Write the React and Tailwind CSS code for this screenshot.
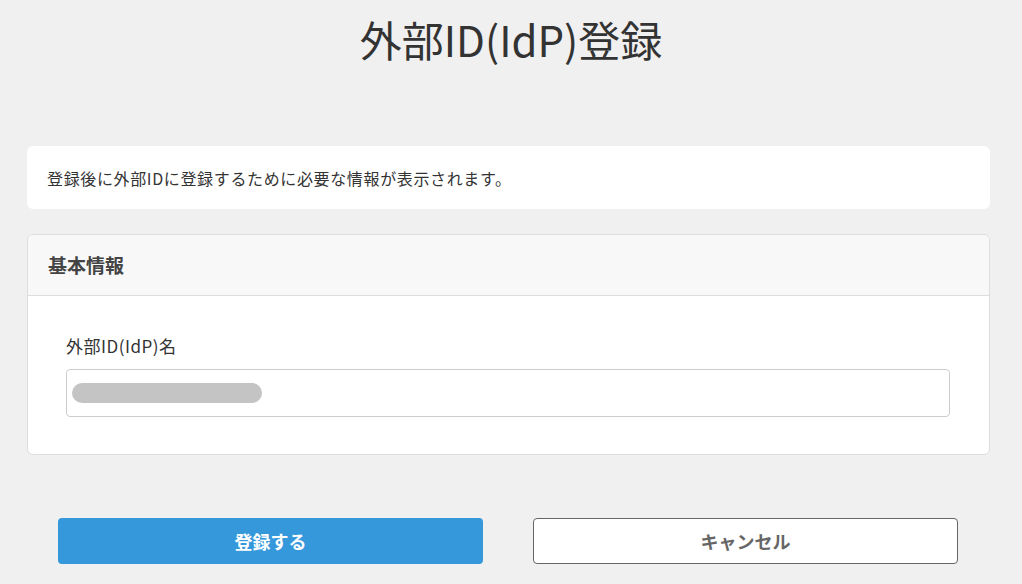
export default function App() {
    return (
        <div
            className="min-h-screen w-full bg-[#f0f0f0] text-[#333]"
            style={{ fontFamily: '"Noto Sans CJK JP", "Noto Sans", sans-serif' }}
        >
            <h1 className="h-[76px] flex items-center justify-center text-[42px] font-normal text-[#333]">
                外部ID(IdP)登録
            </h1>

            <div className="ml-[27px] w-[963px]">
                <div className="mt-[70px] h-[63px] rounded-md bg-white px-5 flex items-center text-[16px] tracking-[0.04em]">
                    登録後に外部IDに登録するために必要な情報が表示されます。
                </div>

                <div className="mt-[25px] rounded-md border border-[#dddddd] bg-white overflow-hidden">
                    <div className="h-[61px] bg-[#f8f8f8] border-b border-[#dddddd] px-5 flex items-center text-[19px] font-bold text-[#444]">
                        基本情報
                    </div>
                    <div className="pt-[38px] pb-[37px] pl-[38px] pr-[39px]">
                        <div className="text-[17px] tracking-[0.03em] leading-6 mb-[11px]">外部ID(IdP)名</div>
                        <div className="h-[48px] rounded-[4px] border border-[#cccccc] bg-white flex items-center pl-[5px]">
                            <div className="h-[20px] w-[190px] rounded-full bg-[#c4c4c4]" />
                        </div>
                    </div>
                </div>

                <div className="mt-[63px] ml-[31px] flex gap-[50px]">
                    <button className="h-[46px] w-[425px] rounded-[4px] bg-[#3598db] text-white text-[18px] font-bold">
                        登録する
                    </button>
                    <button className="h-[46px] w-[425px] rounded-[4px] border border-[#666] bg-white text-[#666] text-[18px] font-bold">
                        キャンセル
                    </button>
                </div>
            </div>
        </div>
    );
}
